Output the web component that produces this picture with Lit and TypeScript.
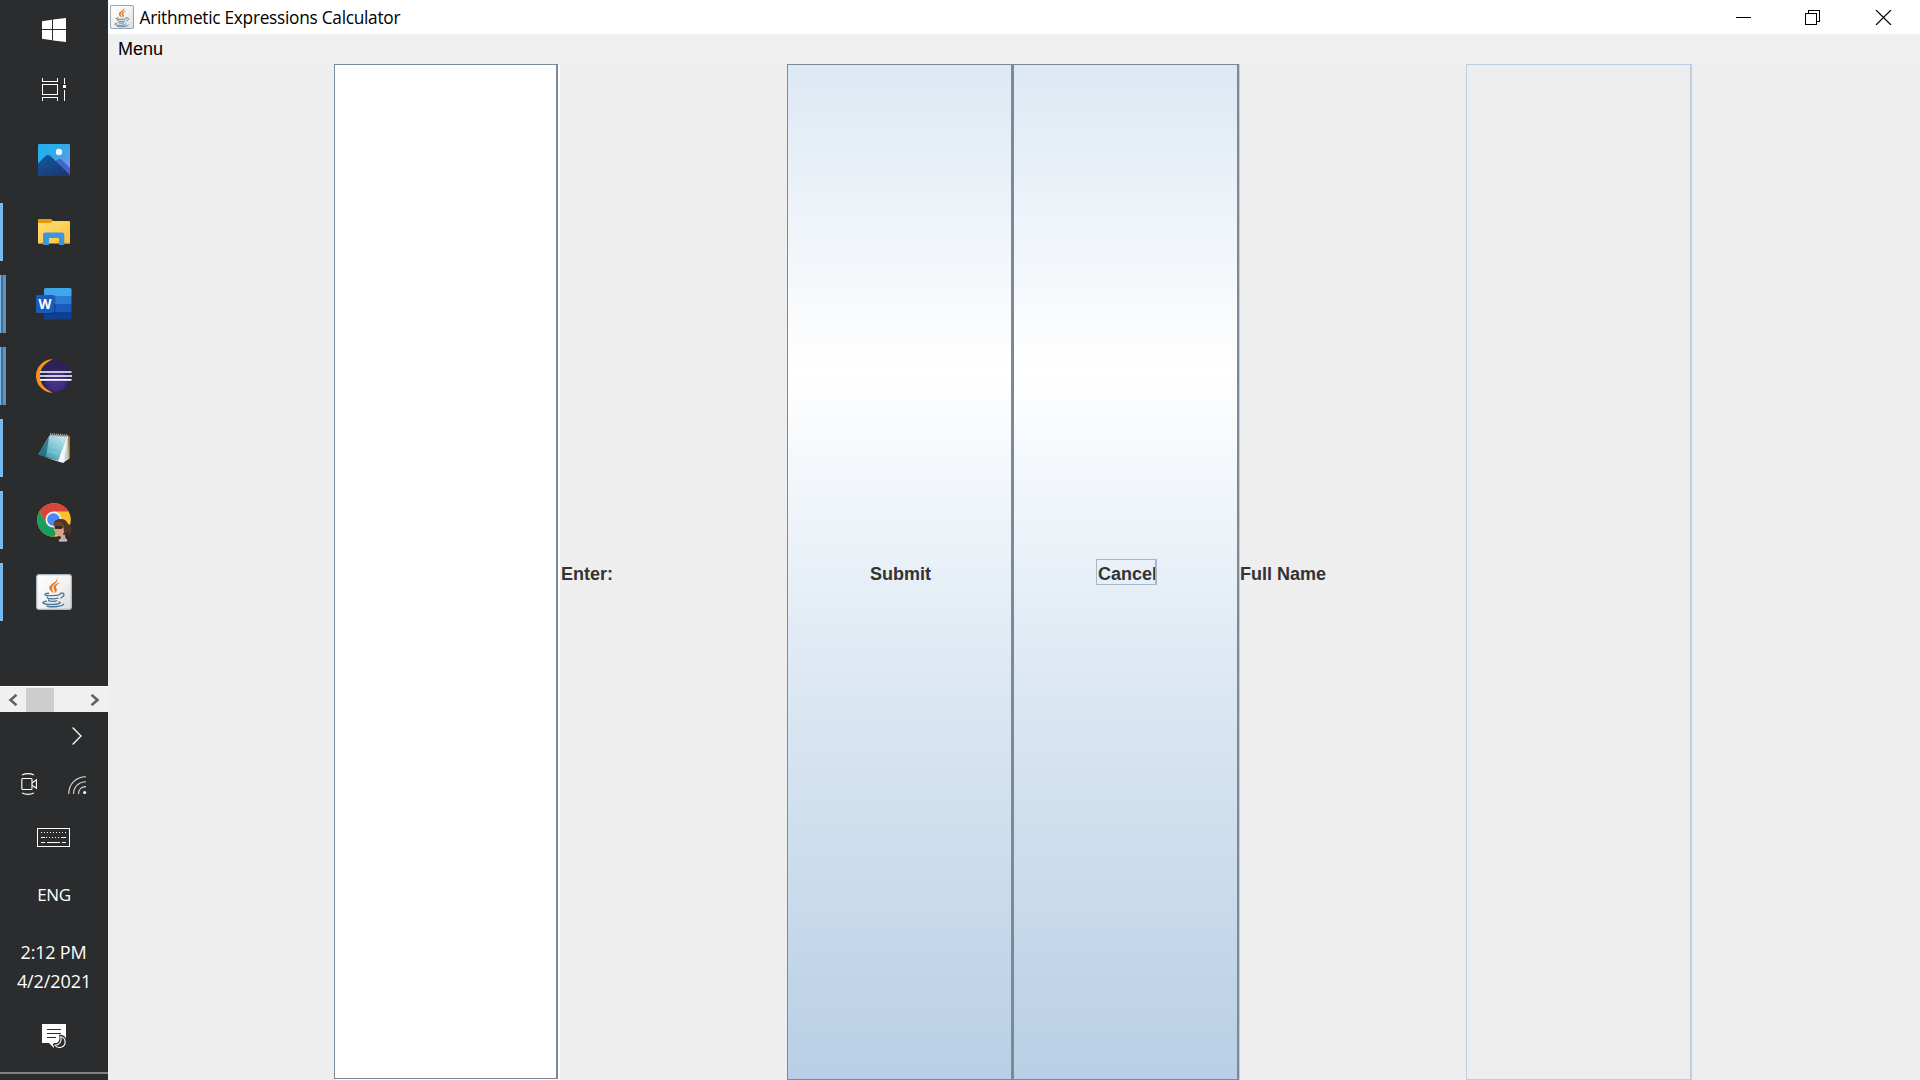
import { LitElement, html, svg, css } from "lit";
import { customElement } from "lit/decorators.js";

const startIcon = svg`<svg width="24" height="24" viewBox="0 0 24 24" fill="#fff"><path d="M0 3.2 10 1.7V11H0zM11 1.5 24 0V11H11zM0 12H10V22.3L0 20.8zM11 12H24V24L11 22.4z"/></svg>`;

const taskViewIcon = svg`<svg width="24" height="24" viewBox="0 0 24 24" fill="none" stroke="#fff" shape-rendering="crispEdges"><path d="M.5 0V3.5H15.5V0M.5 6.5H15.5V16.5H.5zM.5 23V19.5H15.5V23M22.5 0V6M22.5 12V23"/><path d="M21 7h3v3h-3z" fill="#fff" stroke="none"/></svg>`;

const photosIcon = svg`<svg width="32" height="32" viewBox="0 0 32 32"><defs>
  <linearGradient id="sky" x1=".4" y1=".2" x2="1" y2=".9"><stop offset="0" stop-color="#28aeea"/><stop offset=".5" stop-color="#4d9fe6"/><stop offset="1" stop-color="#a986e2"/></linearGradient>
  <linearGradient id="hill" x1="0" y1="0" x2=".6" y2="1"><stop offset="0" stop-color="#125ba3"/><stop offset="1" stop-color="#1b3a73"/></linearGradient>
  <clipPath id="frame"><rect width="32" height="32" rx="1.2"/></clipPath></defs>
  <g clip-path="url(#frame)"><rect width="32" height="32" fill="url(#sky)"/><path d="M17 18 19.500 15.600Q21.500 14.300 23.500 15.600L32 24V32H17z" fill="#3f66c8"/><path d="M0 19.500 7.500 12Q10 9.800 12.500 12L32 31V32H0z" fill="url(#hill)"/><circle cx="21" cy="8" r="3.200" fill="#f2f4f6"/></g></svg>`;

const folderIcon = svg`<svg width="32" height="28" viewBox="0 0 32 28"><defs><linearGradient id="fold" x1="0" y1="0" x2="1" y2="1"><stop offset="0" stop-color="#ffdc76"/><stop offset="1" stop-color="#fbc43c"/></linearGradient></defs>
  <path d="M0 1.500Q0 1 .6 1H13L15.500 3 13 6H0z" fill="#e29c0b"/><path d="M0 5H12.500L15 3H31Q32 3 32 4V25.500H0z" fill="url(#fold)"/><path d="M5 27V16.500Q5 14.500 7 14.500H24Q26.300 14.500 26.300 16.500V27H21V20.500Q21 20 20.500 20H11.500Q11 20 11 20.500V27z" fill="#3a97de"/><path d="M0 25H5M26.500 25H32" stroke="#e4ac2b"/></svg>`;

const wordIcon = svg`<svg width="36" height="32" viewBox="0 0 36 32"><path d="M8 1.500Q8 0 9.500 0H34Q35.500 0 35.500 1.500V8H8z" fill="#41a5ee"/><path d="M8 8H35.500V16H8z" fill="#2b7cd3"/><path d="M8 16H35.500V24H8z" fill="#185abd"/><path d="M8 24H35.500V30Q35.500 31.500 34 31.500H9.500Q8 31.500 8 30z" fill="#103f91"/><path d="M9 7H18Q19.500 7 19.500 9V24.500Q19.500 26 18 26H9z" fill="#000" opacity=".2"/><rect y="7" width="18" height="18" rx="1.500" fill="#185abd"/><text x="9" y="21" text-anchor="middle" font-family="Open Sans, sans-serif" font-size="13.500" font-weight="700" fill="#fff" textLength="13" lengthAdjust="spacingAndGlyphs">W</text></svg>`;

const eclipseIcon = svg`<svg width="36" height="34" viewBox="0 0 36 34"><defs><radialGradient id="moon" cx=".5" cy=".65" r=".6"><stop offset="0" stop-color="#4c358f"/><stop offset=".55" stop-color="#3b2a78"/><stop offset=".6" stop-color="#2c2255"/></radialGradient></defs>
  <path d="M16.700 .3A16.700 16.700 0 0 0 16.700 33.700A18 18 0 0 1 16.700 .3z" fill="#f7941e"/><circle cx="19.900" cy="17" r="16" fill="url(#moon)"/><path d="M4 13H35.500M4 17H36M4 20.800H35.500" stroke="#fff" stroke-width="1.700"/></svg>`;

const notepadIcon = svg`<svg width="33" height="32" viewBox="0 0 33 32"><defs><linearGradient id="page" x1="0" y1="1" x2=".8" y2="0"><stop offset="0" stop-color="#297f8e"/><stop offset=".45" stop-color="#66bac8"/><stop offset="1" stop-color="#c2e9ee"/></linearGradient></defs>
  <path d="M29 3 32 4.500V26L29 28z" fill="#a77b2c"/><path d="M12 3 30 4 30.500 27 25 31z" fill="#e6edef"/><path d="M27.800 8V29M29.300 6V27.500" stroke="#8d9ba0" stroke-width=".6"/><path d="M11.500 3.500 29.500 4.500 20 28.500 0 22.500z" fill="url(#page)"/><path d="M11 5 8 25 0 22.500z" fill="#176173" opacity=".7"/><path d="M29.500 5 28 17 25 31 6 25 20 28.500z" fill="#f1f8f9"/><path d="M12 2.500 30 4" stroke="#9da3a4" stroke-width="3" stroke-dasharray="1.200 .8"/><path d="M13 9 25 11M11 14 22 16.500M9 19 20 22" stroke="#9cd4dc" stroke-width=".5"/></svg>`;

const chromeIcon = svg`<svg class="chrome" width="36" height="39" viewBox="0 0 36 39"><circle cx="18" cy="17" r="16.800" fill="#fbc02d"/><path d="M3.450 8.600A16.800 16.800 0 0 1 32.550 8.600H18L10.700 21.200z" fill="#da453b"/><path d="M3.450 8.600A16.800 16.800 0 0 0 18 33.800L25.270 21.200 10.730 21.200z" fill="#17a05d"/><circle cx="17.500" cy="16.500" r="8" fill="#f1f1f1"/><circle cx="17.500" cy="16.500" r="6.300" fill="#4b89f5"/>
  <path d="M17.500 22Q18 16 24 16Q30 15.500 32 21Q36 22 35.500 27Q35.500 31 32 32.500Q33.500 29 31 27L29 32 24 33z" fill="#513425"/><path d="M19 21Q23 18 27 22L28 29 26 33Q21 34 19.500 30L18 27z" fill="#d9a184"/><path d="M18.500 20.500Q24 16 28 23L27 25Q23 24 19 24z" fill="#6c4530"/><path d="M19 24.500H26" stroke="#29282a" stroke-width="2.800"/><path d="M24 31 29 32 29.500 35Q31 36 31.500 37.500Q27 39 22.500 37.500L25 35z" fill="#cfa695"/><path d="M23.500 36.500Q27 38.500 31 36.500V38.500H23z" fill="#c8c6e7"/></svg>`;

const javaIcon = (size: number, edge: string) => svg`<svg width=${size} height=${size} viewBox="0 0 36 36"><defs><linearGradient id="tile" x1="0" y1="0" x2="1" y2="1"><stop offset="0" stop-color="#fff"/><stop offset=".5" stop-color="#f3f3f3"/><stop offset="1" stop-color="#dcdcdc"/></linearGradient></defs>
  <rect x=".6" y=".6" width="34.800" height="34.800" rx="2.600" fill="url(#tile)" stroke=${edge} stroke-width="1.300"/>
  <g fill="#e8761c"><path d="M20.800 3.500C22.500 8 13.200 9.600 13.300 14C13.400 16.500 17 18.500 17.500 19.500C17 16.500 15.500 15.300 16.200 13C17 10.300 23.500 8.500 20.800 3.500z"/><path d="M24.300 8.600C20 9.500 17.200 11.500 17.500 14C17.700 16 19.600 16.500 18.300 19.300C21.500 17.500 21.300 15.800 20.200 14.300C19 12.500 21.500 10.300 24.300 8.600z"/></g>
  <g fill="none" stroke="#4b7a9d" stroke-width="1.400" stroke-linecap="round"><path d="M12.500 19.300C7.500 20 7.500 21.300 13 21.600C18 21.800 22 21.300 24 20.600M24.500 19.300C28.500 18.300 29.500 21.500 24.800 24M11.300 23.300C11 25 18 25.300 22 24.200M12.500 26C12.300 27.600 17 27.700 20.800 26.900M10.300 27.300C3.500 28.300 8 30.800 16 30.500C22.500 30.300 25.500 29 23.300 28M11 32.200C17 33.300 26 32.500 27.500 30.300"/></g></svg>`;

const cameraIcon = svg`<svg width="17" height="22" viewBox="0 0 17 22" fill="none" stroke="#fff" stroke-width="1.150"><path d="M1 2Q7 -.7 13 2M1 20Q7 22.700 13 20"/><rect x=".8" y="5.500" width="10.200" height="11" rx="1"/><path d="M11 10 15.400 6.800V15.200L11 12.200"/></svg>`;

const wifiIcon = svg`<svg width="19" height="19" viewBox="0 0 19 19" fill="none" stroke="#ddd" stroke-width="1.100"><path d="M.7 18C.7 8 8 .8 18 .8M5.500 18C5.500 11 11 5.700 18 5.700M10.500 18C10.500 13.500 13.500 10.600 18 10.600"/><circle cx="16.600" cy="16.600" r="1.500" fill="#fff" stroke="none"/></svg>`;

const keyboardIcon = svg`<svg width="33" height="19" viewBox="0 0 33 19" fill="none" stroke="#fff" shape-rendering="crispEdges"><path d="M.5 .5H32.500V18.500H.5z"/><path d="M4 4.500H30M9 9.500H25" stroke-dasharray="1 2"/><path d="M4 9.500H8M25 9.500H29M4 14.500H8M10 14.500H23M25 14.500H29"/></svg>`;

const noticeIcon = svg`<svg width="24" height="25" viewBox="0 0 24 25"><path d="M0 0H24V19H12V24L7 19H0z" fill="#fff"/><path d="M5 5.500H19M5 9.500H19M5 13.500H14" stroke="#2b2c2d"/><path d="M18 11.500C25 12 26.500 22 19 24.200C15 25 12.500 23 11.700 20.500C16.500 21 19 17 18 11.500z" fill="#2b2c2d" stroke="#2b2c2d" stroke-width="1.500"/><path d="M18.800 12.800C24.500 14 24.500 22 19 23.300C16 24 14 22.800 13 21.300C18 21 20 17 18.800 12.800z" fill="#2b2c2d" stroke="#fff" stroke-width="1.100"/></svg>`;

@customElement("task-bar")
export class TaskBar extends LitElement {
  static styles = css`
    :host { display: flex; flex-direction: column; width: 108px; height: 1080px; background: #2b2c2d; color: #fff; font-family: "Open Sans", "Noto Sans", sans-serif; }
    svg { display: block; flex: none; }
    .slot { height: 60px; display: flex; align-items: center; justify-content: center; }
    .apps { padding-top: 4px; height: 566px; box-sizing: border-box; }
    .app { height: 72px; display: grid; grid-template-columns: 6px 96px 6px; align-items: center; justify-items: center; }
    .chrome { margin-top: 4px; }
    .mark { justify-self: start; width: 3px; height: 58px; background: #76b9ed; }
    .mark.multi { width: 6px; background: linear-gradient(90deg, #76b9ed 0 1px, #4b6f8d 1px 3px, #5f93bd 3px); }
    .mark.none { background: none; }
    .scroll { height: 26px; box-sizing: border-box; background: #f0f0f0; border-top: 1px solid #fff; display: grid; grid-template-columns: 26px 28px 1fr 26px; align-items: center; justify-items: center; }
    .back { margin-right: 1px; }
    .thumb { width: 28px; height: 24px; background: #cdcdcd; }
    .more { height: 46px; box-sizing: border-box; padding: 15px 26px 0 0; display: flex; justify-content: flex-end; }
    .tray { height: 52px; display: flex; align-items: flex-start; justify-content: space-between; padding: 0 21px 0 21px; box-sizing: border-box; margin-top: 15px; }
    .wifi { margin-top: 3px; }
    .keys { height: 52px; margin-top: 3px; padding-right: 1px; display: flex; justify-content: center; }
    .text { height: 29px; line-height: 29px; text-align: center; font-size: 17px; white-space: nowrap; letter-spacing: -0.4px; }
    .time { margin-top: 29px; font-size: 18px; letter-spacing: -0.2px; padding-right: 1px; }
    .date { font-size: 18px; letter-spacing: -0.1px; }
    .notice { margin-top: 28px; height: 48px; display: flex; justify-content: center; }
    .rule { height: 2px; background: #808181; }
  `;
  private apps = [
    { icon: photosIcon, mark: "none" },
    { icon: folderIcon, mark: "" },
    { icon: wordIcon, mark: "multi" },
    { icon: eclipseIcon, mark: "multi" },
    { icon: notepadIcon, mark: "" },
    { icon: chromeIcon, mark: "" },
    { icon: javaIcon(36, "#a9b9c6"), mark: "" },
  ];
  render() {
    return html`
      <div class="slot">${startIcon}</div>
      <div class="slot">${taskViewIcon}</div>
      <div class="apps">${this.apps.map((a) => html`<div class="app"><span class="mark ${a.mark}"></span>${a.icon}</div>`)}</div>
      <div class="scroll">
        <svg class="back" width="10" height="12" viewBox="0 0 10 12" fill="none" stroke="#606060" stroke-width="2.600"><path d="M8.500 .8 2.500 6 8.500 11.200"/></svg>
        <div class="thumb"></div><span></span>
        <svg width="10" height="12" viewBox="0 0 10 12" fill="none" stroke="#606060" stroke-width="2.600"><path d="M1.500 .8 7.500 6 1.500 11.200"/></svg>
      </div>
      <div class="more"><svg width="10" height="18" viewBox="0 0 10 18" fill="none" stroke="#fff" stroke-width="1.300"><path d="M.6 .5 9 9 .6 17.500"/></svg></div>
      <div class="tray">${cameraIcon}<span class="wifi">${wifiIcon}</span></div>
      <div class="keys">${keyboardIcon}</div>
      <div class="text">ENG</div>
      <div class="text time">2:12 PM</div>
      <div class="text date">4/2/2021</div>
      <div class="notice">${noticeIcon}</div>
      <div class="rule"></div>
    `;
  }
}

@customElement("app-root")
export class AppRoot extends LitElement {
  static styles = css`
    :host { display: flex; width: 1920px; height: 1080px; overflow: hidden; font-family: "Liberation Sans", Arial, sans-serif; font-size: 18px; color: #333; }
    svg { display: block; }
    .window { flex: 1; display: flex; flex-direction: column; background: #eee; }
    .title { height: 34px; box-sizing: border-box; background: #fff; color: #000; display: flex; align-items: center; padding: 0 28px 0 2px; }
    .name { flex: 1; margin-left: 5.500px; padding-top: 1px; font: 17.3px/33px "Open Sans", "Noto Sans", sans-serif; letter-spacing: -0.28px; }
    .controls { display: flex; gap: 54px; }
    .menu { height: 30px; line-height: 30px; padding-left: 10px; background: #f0f0f0; color: #000; }
    .board { height: 1016px; display: grid; grid-template-columns: 226px 226px 227px 226px 227px 226px 226px 1fr; }
    .input { box-sizing: border-box; height: 1015px; background: #fff; border: solid #7a8a99; border-width: 1px 2px 1px 1px; margin-right: 2px; box-shadow: 2px 1px #fff; }
    .label, .button { display: flex; align-items: center; font-weight: 700; box-sizing: border-box; padding-top: 4px; white-space: nowrap; }
    .enter { padding-left: 1px; }
    .button { justify-content: center; border: 1px solid #7a8a99; border-right-width: 2px; padding-top: 0; background: linear-gradient(#dde8f3, #fff 30%, #dde8f3 60%, #b8cfe5); }
    .cancel { margin-right: 1px; box-shadow: 1px 0 #b8cfe5; padding-left: 1px; }
    .caption { padding: 4px 0 0 2px; }
    .focus { box-sizing: border-box; width: 61px; height: 26px; line-height: 29px; padding: 0 0 0 1.500px; border: 1px solid #a3b8cc; border-right-width: 2px; overflow: hidden; }
    .output { box-sizing: border-box; height: 1016px; border: 1px solid #b8cfe5; border-right-width: 2px; }
  `;
  render() {
    return html`
      <task-bar></task-bar>
      <main class="window">
        <header class="title">
          ${javaIcon(24, "#7890a3")}
          <span class="name">Arithmetic Expressions Calculator</span>
          <div class="controls">
            <svg width="15" height="15" stroke="#000" shape-rendering="crispEdges"><path d="M0 7.500H15"/></svg>
            <svg width="16" height="15" fill="none" stroke="#000" shape-rendering="crispEdges"><path d="M.5 3.500H11.500V14.500H.5zM3.500 3V.5H14.500V11.500H12"/></svg>
            <svg width="17" height="15" stroke="#000" stroke-width="1.200"><path d="M1 0 16 15M16 0 1 15"/></svg>
          </div>
        </header>
        <nav class="menu">Menu</nav>
        <section class="board">
          <div></div>
          <div class="input"></div>
          <div class="label enter">Enter:</div>
          <div class="button"><span class="caption">Submit</span></div>
          <div class="button cancel"><span class="focus">Cancel</span></div>
          <div class="label">Full Name</div>
          <div class="output"></div>
          <div></div>
        </section>
      </main>
    `;
  }
}
